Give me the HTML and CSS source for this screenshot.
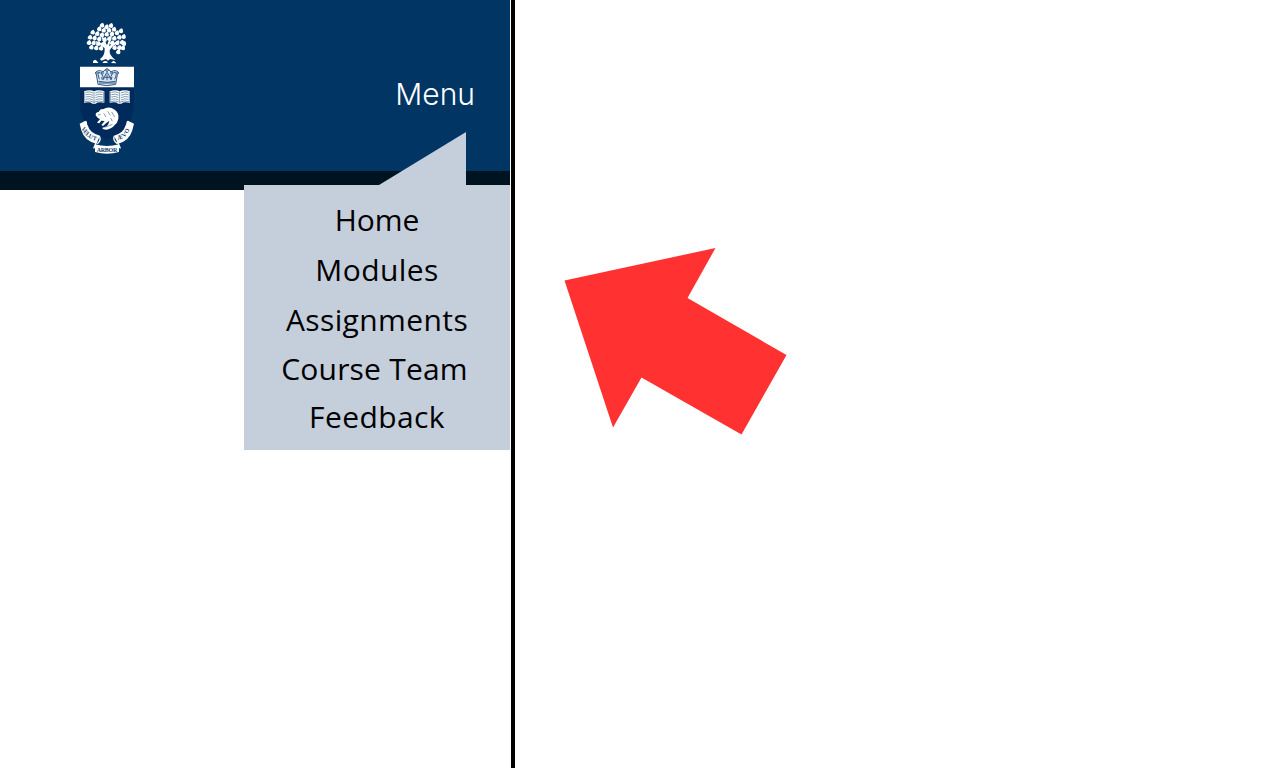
FILE: index.html
```
<!DOCTYPE html>
<html lang="en">
<head>
<meta charset="utf-8">
<title>Course menu</title>
<link rel="stylesheet" href="styles.css">
</head>
<body>
<main class="page">
  <section class="mobile">
    <header class="banner">
      <svg class="crest" viewBox="0 0 225 435" role="img" aria-label="University crest">
        <defs><path id="leaf" d="M-7 3Q-7-6 3-8Q8-2 6 4Q1 10-7 3Z"/></defs>
        <path class="shield" d="M30 200H192V270Q190 340 111 376Q33 340 30 270Z"/>
        <g class="ink">
          <path d="M90 132Q105 123 104 100Q92 88 76 81L78 78Q95 84 104 91L94 64L98 63L111 91L122 61L126 62L117 94Q130 84 147 76L149 80Q126 92 119 106Q117 122 137 135L120 132L114 137L108 132L94 137Z"/>
          <path d="M69 139Q74 131 80 137L85 144H69ZM97 144Q101 136 110 139L114 144ZM123 144Q130 135 135 140L139 145Z"/>
          <use href="#leaf" x="96" y="31"/><use href="#leaf" x="110" y="36"/><use href="#leaf" x="123" y="32"/>
          <use href="#leaf" x="88" y="42"/><use href="#leaf" x="101" y="46"/><use href="#leaf" x="117" y="46"/><use href="#leaf" x="132" y="43"/>
          <use href="#leaf" x="68" y="52"/><use href="#leaf" x="82" y="56"/><use href="#leaf" x="96" y="60"/><use href="#leaf" x="110" y="58"/><use href="#leaf" x="126" y="57"/><use href="#leaf" x="141" y="54"/><use href="#leaf" x="153" y="48"/>
          <use href="#leaf" x="60" y="67"/><use href="#leaf" x="74" y="69"/><use href="#leaf" x="88" y="72"/><use href="#leaf" x="104" y="74"/><use href="#leaf" x="118" y="71"/><use href="#leaf" x="133" y="70"/><use href="#leaf" x="148" y="67"/><use href="#leaf" x="161" y="65"/>
          <use href="#leaf" x="57" y="83"/><use href="#leaf" x="71" y="84"/><use href="#leaf" x="85" y="86"/><use href="#leaf" x="98" y="88"/><use href="#leaf" x="127" y="84"/><use href="#leaf" x="142" y="84"/><use href="#leaf" x="156" y="82"/>
          <use href="#leaf" x="64" y="97"/><use href="#leaf" x="79" y="99"/><use href="#leaf" x="93" y="100"/><use href="#leaf" x="134" y="98"/><use href="#leaf" x="148" y="98"/><use href="#leaf" x="162" y="86"/><use href="#leaf" x="159" y="99"/><use href="#leaf" x="145" y="111"/>
          <path d="M30 155H192V217H30Z"/>
        </g>
        <g class="crown">
          <path d="M84 208L79 178Q75 169 83 168Q92 164 99 171Q103 163 111 163Q119 163 123 171Q131 164 140 168Q147 170 142 179L137 208Q111 216 84 208Z"/>
          <path d="M85 199Q111 205 137 199M88 193Q82 177 85 172Q99 173 101 194M134 193Q142 177 136 172Q123 173 121 194M101 192Q106 178 111 172Q118 180 121 192M95 186L97 195M126 186L123 195M111 179V196M105 187H117M87 204H135"/>
          <circle cx="111" cy="165" r="4"/><circle cx="79" cy="174" r="3"/><circle cx="143" cy="174" r="3"/><circle cx="97" cy="174" r="3"/><circle cx="125" cy="174" r="3"/>
        </g>
        <g id="book">
          <path class="ink" d="M42 229Q60 222 72 229Q86 222 103 229V263Q83 259 77 266H67Q62 259 42 263Z"/>
          <path class="line" d="M72 230V262M47 232Q60 228 69 234M47 239Q60 235 69 241M47 246Q60 242 69 248M47 253Q60 249 69 255M76 234Q87 228 98 232M76 241Q87 235 98 239M76 248Q87 242 98 246M76 255Q87 249 98 253M44 230V260M101 230V260M44 260Q62 255 72 262Q84 255 101 260"/>
        </g>
        <use href="#book" x="77"/>
        <path class="ink" d="M77 301Q76 292 86 291Q91 280 99 283Q117 272 134 284Q148 294 145 312Q142 325 134 330Q126 341 109 344Q99 344 96 339L110 334Q117 326 118 317L109 324L99 333L94 330L104 318L94 317L88 325L81 323L90 312Q81 309 77 301Z"/>
        <path class="line" d="M84 300L92 298M101 295L108 306M113 289L121 301M125 291L134 306M122 309L127 319M104 337L127 328"/>
        <path class="ink" d="M29 326L46 317L54 333Q59 354 90 362L79 386Q44 379 34 346ZM192 326L174 317L166 333Q161 354 132 362L144 386Q177 379 187 346ZM75 388Q111 398 147 388V411Q111 421 75 411Z"/>
        <path class="ribbon" d="M80 379L72 398L77 397M142 379L150 398L145 397M47 318Q53 327 44 334M173 318Q168 327 177 334M88 363Q95 376 82 386M133 363Q127 376 142 386"/>
        <g class="motto">
          <text transform="translate(34 340) rotate(62)">V</text><text transform="translate(39 350) rotate(50)">E</text><text transform="translate(46 359) rotate(39)">L</text><text transform="translate(54 367) rotate(27)">U</text><text transform="translate(67 374) rotate(16)">T</text>
          <text transform="translate(143 376) rotate(-22)">Æ</text><text transform="translate(162 368) rotate(-42)">V</text><text transform="translate(172 357) rotate(-56)">O</text>
          <text x="80" y="410" textLength="62">ARBOR</text>
        </g>
      </svg>
      <span class="menu-button">Menu</span>
    </header>
    <nav class="dropdown">
      <svg class="pointer" viewBox="0 0 87 53"><path d="M0 53L87 0V53Z"/></svg>
      <a class="item home">Home</a>
      <a class="item modules">Modules</a>
      <a class="item assignments">Assignments</a>
      <a class="item team">Course Team</a>
      <a class="item feedback">Feedback</a>
    </nav>
  </section>
  <section class="notes">
    <svg class="arrow" viewBox="0 0 223 188"><path d="M0.500 32.500L151.500 0L123.500 50L222.500 107L177.500 186.500L77.500 129.500L49 179.500Z"/></svg>
  </section>
</main>
</body>
</html>
```
FILE: styles.css
```
body {
  margin: 0;
  background: #fff;
  font-family: "Open Sans", sans-serif;
}
.page {
  display: flex;
  height: 768px;
  overflow: hidden;
}
.mobile {
  display: flex;
  flex-direction: column;
  box-sizing: border-box;
  width: 515px;
  border-right: 4px solid #000;
  padding-right: 1px;
}
.banner {
  display: flex;
  justify-content: space-between;
  box-sizing: border-box;
  height: 190px;
  flex: none;
  padding: 15px 35px 0 70px;
  background: #003564;
  border-bottom: 19px solid #001321;
}
.crest {
  width: 75px;
  height: 145px;
}
.shield { fill: #002a5c; }
.ink { fill: #fff; }
.crown { fill: #dce5ef; stroke: #315b89; stroke-width: 3; }
.line { fill: none; stroke: #44698f; stroke-width: 2; }
.ribbon { fill: none; stroke: #fff; stroke-width: 4; }
.motto {
  fill: #143c6b;
  font: 700 18px "Liberation Serif", serif;
}
.menu-button {
  margin-top: 59px;
  color: #fff;
  font: 300 30px/40px Inter, sans-serif;
  letter-spacing: 0;
}
.dropdown {
  position: relative;
  display: flex;
  flex-direction: column;
  align-items: center;
  box-sizing: border-box;
  width: 266px;
  height: 265px;
  margin: -5px 0 0 244px;
  padding-top: 10px;
  background: #c5cedb;
}
.pointer {
  position: absolute;
  left: 135px;
  top: -53px;
  width: 87px;
  height: 53px;
  fill: #c5cedb;
}
.item {
  height: 49.300px;
  color: #000;
  font-size: 30px;
  line-height: 51px;
  letter-spacing: 0.400px;
  white-space: nowrap;
}
.home { line-height: 50px; letter-spacing: -0.100px; }
.team { padding-right: 5px; letter-spacing: 0.200px; }
.feedback { line-height: 50px; }
.notes {
  flex: 1;
  padding: 247.500px 0 0 49.500px;
}
.arrow {
  display: block;
  width: 223px;
  height: 188px;
  margin-left: -0.500px;
  fill: #ff3131;
}
```
